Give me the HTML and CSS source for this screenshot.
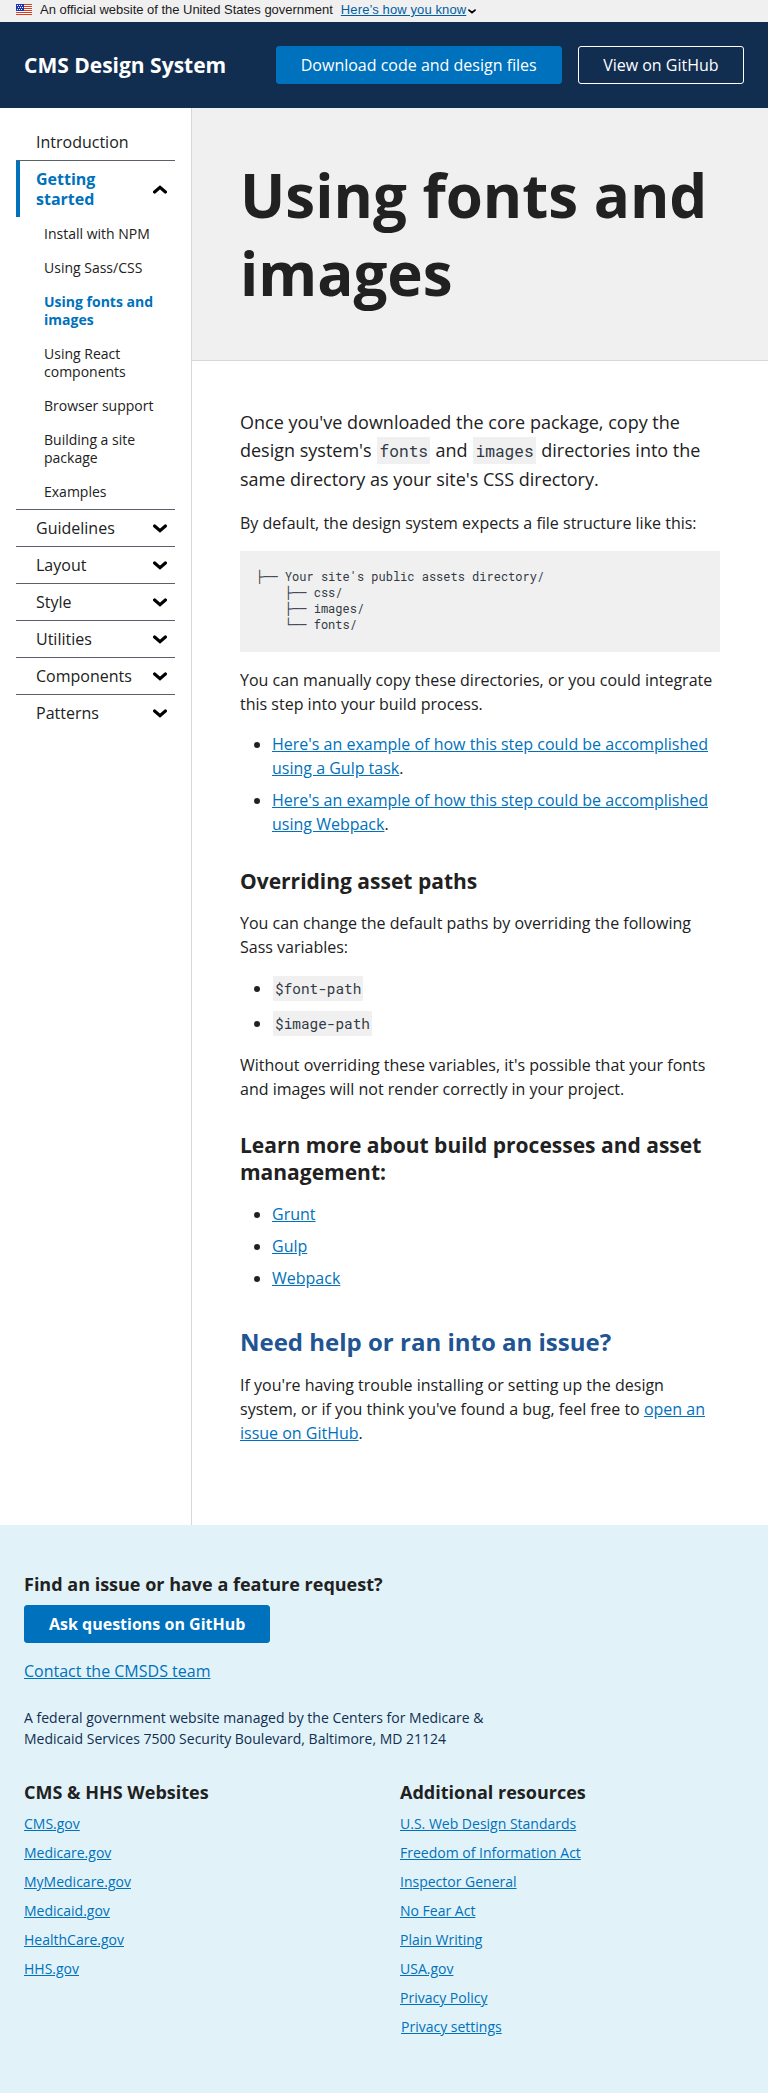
FILE: index.html
```html
<!DOCTYPE html>
<html lang="en">
<head>
<meta charset="utf-8">
<title>Using fonts and images - CMS Design System</title>
<link rel="stylesheet" href="styles.css">
</head>
<body>
<svg width="0" height="0" class="defs">
  <symbol id="chev" viewBox="0 0 14 9"><path d="M1.6 2 7 6.6 12.400 2" fill="none" stroke="#000" stroke-width="3.2" stroke-linecap="round"/></symbol>
</svg>
<div class="banner">
  <svg class="flag" width="16" height="11" viewBox="0 0 16 11">
    <path fill="#fff" d="M0 0h16v11H0z"/>
    <path fill="#db3e1f" d="M0 0h16v1H0zM0 2h16v1H0zM0 4h16v1H0zM0 6h16v1H0zM0 8h16v1H0zM0 10h16v1H0z"/>
    <path fill="#1e33b1" d="M0 0h8v7H0z"/>
    <path fill="#fff" d="M1 1h1v1H1zM3 1h1v1H3zM5 1h1v1H5zM2 3h1v1H2zM4 3h1v1H4zM6 3h1v1H6zM1 5h1v1H1zM3 5h1v1H3zM5 5h1v1H5z"/>
  </svg>
  <span class="banner-text">An official website of the United States government</span>
  <a class="banner-link">Here’s how you know</a>
  <svg class="banner-chev" width="8" height="5"><use href="#chev"/></svg>
</div>
<header class="header">
  <div class="brand">CMS Design System</div>
  <a class="btn btn-primary">Download code and design files</a>
  <a class="btn btn-outline">View on GitHub</a>
</header>
<div class="layout">
  <nav class="nav">
    <div class="item"><span>Introduction</span></div>
    <div class="item open"><span>Getting started</span><svg class="chev up"><use href="#chev"/></svg></div>
    <div class="sub">
      <a>Install with NPM</a>
      <a>Using Sass/CSS</a>
      <a class="current">Using fonts and images</a>
      <a>Using React components</a>
      <a>Browser support</a>
      <a>Building a site package</a>
      <a>Examples</a>
    </div>
    <div class="item"><span>Guidelines</span><svg class="chev"><use href="#chev"/></svg></div>
    <div class="item"><span>Layout</span><svg class="chev"><use href="#chev"/></svg></div>
    <div class="item"><span>Style</span><svg class="chev"><use href="#chev"/></svg></div>
    <div class="item"><span>Utilities</span><svg class="chev"><use href="#chev"/></svg></div>
    <div class="item"><span>Components</span><svg class="chev"><use href="#chev"/></svg></div>
    <div class="item"><span>Patterns</span><svg class="chev"><use href="#chev"/></svg></div>
  </nav>
  <main class="main">
    <div class="hero"><h1>Using fonts and images</h1></div>
    <div class="content">
      <p class="lead">Once you've downloaded the core package, copy the design system's <code>fonts</code> and <code>images</code> directories into the same directory as your site's CSS directory.</p>
      <p>By default, the design system expects a file structure like this:</p>
<pre class="tree">├── Your site's public assets directory/
    ├── css/
    ├── images/
    └── fonts/</pre>
      <p>You can manually copy these directories, or you could integrate this step into your build process.</p>
      <ul>
        <li><a class="link">Here's an example of how this step could be accomplished using a Gulp task</a>.</li>
        <li><a class="link">Here's an example of how this step could be accomplished using Webpack</a>.</li>
      </ul>
      <h3 class="paths-title">Overriding asset paths</h3>
      <p>You can change the default paths by overriding the following Sass variables:</p>
      <ul class="codes">
        <li><code>$font-path</code></li>
        <li><code>$image-path</code></li>
      </ul>
      <p>Without overriding these variables, it's possible that your fonts and images will not render correctly in your project.</p>
      <h3>Learn more about build processes and asset management:</h3>
      <ul>
        <li><a class="link">Grunt</a></li>
        <li><a class="link">Gulp</a></li>
        <li><a class="link">Webpack</a></li>
      </ul>
      <h2>Need help or ran into an issue?</h2>
      <p>If you're having trouble installing or setting up the design system, or if you think you've found a bug, feel free to <a class="link">open an issue on GitHub</a>.</p>
    </div>
  </main>
</div>
<footer class="footer">
  <h4>Find an issue or have a feature request?</h4>
  <a class="btn btn-primary btn-bold">Ask questions on GitHub</a>
  <div class="contact"><a class="link">Contact the CMSDS team</a></div>
  <p class="address">A federal government website managed by the Centers for Medicare &amp; Medicaid Services 7500 Security Boulevard, Baltimore, MD 21124</p>
  <div class="columns">
    <div class="column">
      <h4>CMS &amp; HHS Websites</h4>
      <a class="link">CMS.gov</a>
      <a class="link">Medicare.gov</a>
      <a class="link">MyMedicare.gov</a>
      <a class="link">Medicaid.gov</a>
      <a class="link">HealthCare.gov</a>
      <a class="link">HHS.gov</a>
    </div>
    <div class="column">
      <h4>Additional resources</h4>
      <a class="link">U.S. Web Design Standards</a>
      <a class="link">Freedom of Information Act</a>
      <a class="link">Inspector General</a>
      <a class="link">No Fear Act</a>
      <a class="link">Plain Writing</a>
      <a class="link">USA.gov</a>
      <a class="link">Privacy Policy</a>
      <a class="link settings">Privacy settings</a>
    </div>
  </div>
</footer>
</body>
</html>
```
FILE: styles.css
```css
* { box-sizing: border-box; }
body {
  margin: 0;
  min-height: 2093px;
  display: flex;
  flex-direction: column;
  background: #fff;
  color: #212121;
  font: 16px/24px "Open Sans", sans-serif;
}
h1, h2, h3, h4, p, ul, pre { margin: 0; }
.defs { display: none; }
.link { color: #0071bc; text-decoration: underline; }

.banner {
  height: 22px;
  padding: 0 16px;
  display: flex;
  align-items: center;
  background: #f0f0f0;
  font: 13px/20px "Liberation Sans", Arial, sans-serif;
  color: #1b1b1b;
}
.flag { margin: -3px 8px 0 0; }
.banner-text { margin-top: -2px; letter-spacing: -0.02px; white-space: nowrap; }
.banner-link { margin: -2px 0 0 8px; color: #005ea2; text-decoration: underline; letter-spacing: 0.11px; white-space: nowrap; }
.banner-chev { margin-left: 2px; }

.header {
  height: 86px;
  padding: 0 24px;
  display: flex;
  align-items: center;
  gap: 16px;
  background: #112e51;
}
.brand { flex: 1; color: #fff; font-size: 21px; font-weight: 700; white-space: nowrap; }
.btn {
  height: 38px;
  padding: 0 24px;
  display: inline-flex;
  align-items: center;
  border: 1px solid transparent;
  border-radius: 3px;
  color: #fff;
  white-space: nowrap;
}
.btn-primary { background: #0071bc; border-color: #0071bc; }
.btn-outline { padding: 0 24.4px; border-color: #fff; }
.btn-bold { font-weight: 700; }

.layout { display: flex; height: 1417px; }
.nav { width: 192px; padding: 16px; border-right: 1px solid #d6d7d9; }
.item {
  display: flex;
  align-items: center;
  justify-content: space-between;
  padding: 8px 8px 8px 20px;
  line-height: 20px;
}
.item + .item, .sub + .item { border-top: 1px solid #5b616b; }
.open { position: relative; color: #0071bc; font-weight: 700; }
.open::before { content: ""; position: absolute; left: 0; top: 0; bottom: 0; width: 4px; background: #0071bc; }
.chev { width: 14px; height: 9px; flex: none; }
.up { transform: scaleY(-1); }
.sub { font-size: 14px; line-height: 18px; }
.sub a { display: block; padding: 8px 16px 8px 28px; }
.sub .current { color: #0071bc; font-weight: 700; }

.main { flex: 1; min-width: 0; }
.hero { height: 253px; padding: 48px; background: #f0f0f0; border-bottom: 1px solid #d6d7d9; }
h1 { font-size: 60px; line-height: 78px; font-weight: 700; }
.content { padding: 47px 48px; }
.content p { margin-bottom: 16px; }
.content .lead { margin-bottom: 18.1px; font-size: 18px; line-height: 28.3px; }
code, .tree { font-family: "Roboto Mono", "DejaVu Sans Mono", monospace; color: #323a45; background: #f0f0f0; }
code { font-size: 0.9em; line-height: 1; padding: 3px 2px; margin: 0 1px; }
.lead code { margin: 0 0.8px 0 1.2px; }
.tree { height: 101px; margin-bottom: 16px; padding: 17px 16px; font-size: 12px; line-height: 16px; }
ul { padding-left: 32px; margin-bottom: 16px; }
li + li { margin-top: 8px; }
.codes li { height: 27px; padding-top: 1px; }
h3 { margin: 31px 0 16px; font-size: 21px; line-height: 27.3px; }
.paths-title { margin: 32px 0 15.3px; }
h2 { margin: 36px 0 15.4px; font-size: 24px; line-height: 31.2px; color: #205493; }

.footer { flex: 1; padding: 47px 24px; background: #e1f3f8; }
h4 { font-size: 18px; line-height: 24px; }
.footer .btn { margin-top: 9px; }
.contact { margin-top: 16px; }
.address { width: 480px; margin-top: 24px; font-size: 14px; line-height: 21px; color: #112e51; }
.columns { display: flex; margin-top: 31px; }
.column { flex: none; width: 376px; display: flex; flex-direction: column; align-items: flex-start; gap: 8px; font-size: 14px; line-height: 21px; }
.column:last-child { width: 344px; }
.column h4 { margin-bottom: 1px; }
.settings { margin-left: 1px; }
```
